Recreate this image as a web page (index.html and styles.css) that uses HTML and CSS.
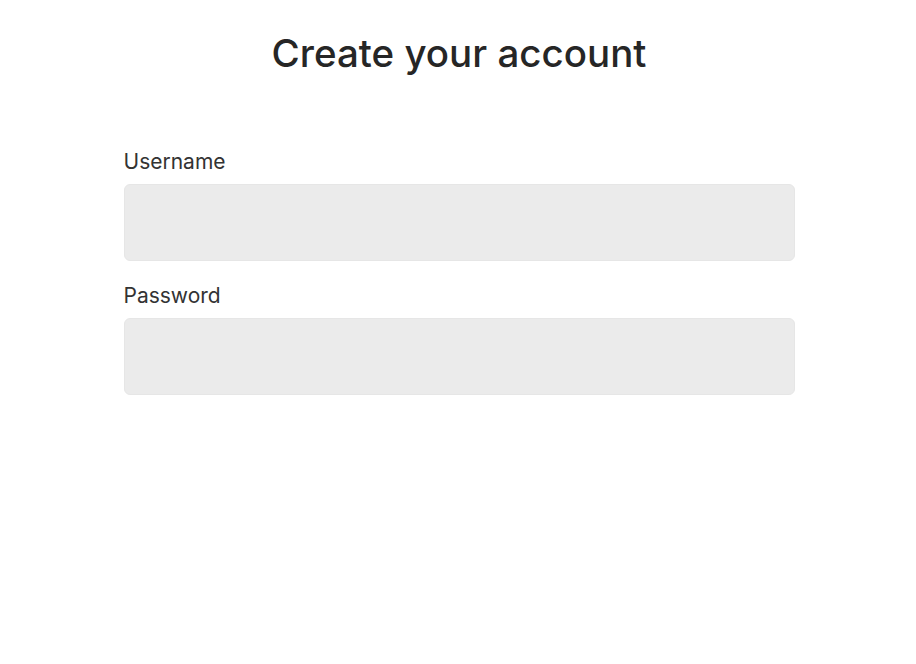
FILE: index.html
```html
<!DOCTYPE html>
<html lang="en">
<head>
<meta charset="utf-8">
<title>Create your account</title>
<link rel="stylesheet" href="styles.css">
</head>
<body>
<main class="page">
  <h1 class="title">Create your account</h1>
  <form class="form">
    <div class="field">
      <label class="label" for="username">Username</label>
      <input class="input" id="username" type="text">
    </div>
    <div class="field">
      <label class="label" for="password">Password</label>
      <input class="input" id="password" type="password">
    </div>
  </form>
</main>
</body>
</html>
```
FILE: styles.css
```css
* { box-sizing: border-box; }
html, body { margin: 0; padding: 0; background: #fff; }
body { font-family: Inter, "Open Sans", sans-serif; color: #2b2b2b; }
.page { width: 671px; margin: 0 auto; padding-top: 30px; transform: translateX(1px); }
.title {
  margin: 0;
  text-align: center;
  font-size: 38.5px;
  font-weight: 500;
  line-height: 46px;
  color: #262626;
}
.form { margin-top: 74px; display: flex; flex-direction: column; gap: 23px; }
.field { display: flex; flex-direction: column; gap: 10px; }
.label { font-size: 21px; line-height: 24px; color: #333; }
.input {
  height: 77px;
  border: 1px solid #e6e6e6;
  border-radius: 6px;
  background: #ebebeb;
  outline: none;
  font: inherit;
}
```
